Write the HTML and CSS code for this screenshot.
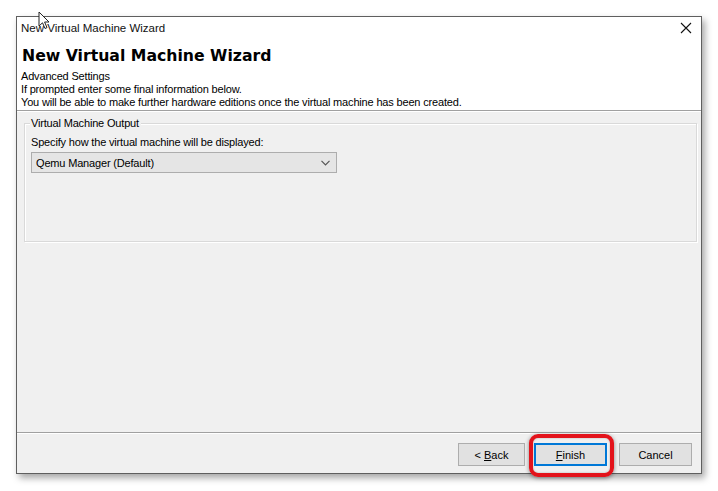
FILE: index.html
```html
<!DOCTYPE html>
<html>
<head>
<meta charset="utf-8">
<link rel="stylesheet" href="styles.css">
</head>
<body>
<div class="window">
  <div class="titlebar">
    <span class="title">New Virtual Machine Wizard</span>
    <svg class="close" width="12" height="12" viewBox="0 0 12 12"><path d="M1 1 L11 11 M11 1 L1 11" stroke="#111" stroke-width="1.1" fill="none"/></svg>
  </div>
  <div class="header">
    <div class="heading">New Virtual Machine Wizard</div>
    <div class="line">Advanced Settings</div>
    <div class="line">If prompted enter some final information below.</div>
    <div class="line">You will be able to make further hardware editions once the virtual machine has been created.</div>
  </div>
  <div class="content">
    <div class="group">
      <span class="legend">Virtual Machine Output</span>
      <div class="line">Specify how the virtual machine will be displayed:</div>
      <div class="combo">
        <span>Qemu Manager (Default)</span>
        <svg class="chev" width="9" height="6" viewBox="0 0 9 6"><path d="M0.5 0.8 L4.5 4.8 L8.5 0.8" stroke="#555" stroke-width="1.2" fill="none"/></svg>
      </div>
    </div>
  </div>
  <div class="footer">
    <div class="btn back"><span>&lt;&nbsp;<u>B</u>ack</span></div>
    <div class="finish-wrap">
      <div class="btn finish"><span><u>F</u>inish</span></div>
      <div class="highlight"></div>
    </div>
    <div class="btn cancel"><span>Cancel</span></div>
  </div>
</div>
<svg class="cursor" width="14" height="20" viewBox="0 0 14 20"><path d="M1 1 L1 15 L4.5 11.8 L7 17.5 L9 16.6 L6.6 11 L11 11 Z" fill="#fff" stroke="#222" stroke-width="1"/></svg>
</body>
</html>
```
FILE: styles.css
```css
html, body {
  margin: 0;
  padding: 0;
  background: #ffffff;
}
body {
  font-family: "Liberation Sans", Arial, sans-serif;
  font-size: 11px;
  letter-spacing: -0.17px;
  color: #000;
  width: 718px;
  height: 491px;
  overflow: hidden;
  position: relative;
}
.window {
  margin: 16px 0 0 16px;
  width: 686px;
  height: 458px;
  box-sizing: border-box;
  border: 1px solid #5f5f5f;
  background: #f0f0f0;
  display: flex;
  flex-direction: column;
  box-shadow: 3px 4px 7px rgba(0,0,0,0.35);
}
.titlebar {
  height: 22px;
  background: #fff;
  display: flex;
  align-items: center;
  justify-content: space-between;
  padding: 0 9px 0 4px;
  flex: none;
}
.title {
  font-size: 11.5px;
  letter-spacing: 0;
  color: #111;
}
.close {
  display: block;
}
.header {
  background: #fff;
  padding: 6px 4px 1px 4px;
  border-bottom: 1px solid #a0a0a0;
  box-shadow: 0 1px 0 #fff;
  flex: none;
}
.heading {
  font-family: "DejaVu Sans", Verdana, sans-serif;
  font-weight: bold;
  font-size: 15.7px;
  letter-spacing: 0;
  line-height: 22px;
  margin: 0 0 3px 1px;
}
.line {
  line-height: 13px;
  white-space: nowrap;
}
.content {
  flex: 1;
  padding: 12px 4px 0 7px;
}
.group {
  position: relative;
  height: 119px;
  box-sizing: border-box;
  border: 1px solid #d9d9d9;
  box-shadow: inset 1px 1px 0 #fff, 1px 1px 0 #fff;
  padding: 12px 6px 0 6px;
}
.legend {
  position: absolute;
  left: 5px;
  top: -7px;
  padding: 0 2px 0 1px;
  background: #f0f0f0;
  line-height: 13px;
}
.combo {
  margin-top: 3px;
  width: 306px;
  height: 21px;
  box-sizing: border-box;
  border: 1px solid #adadad;
  background: #e5e5e5;
  display: flex;
  align-items: center;
  justify-content: space-between;
  padding: 0 6px 0 4px;
}
.chev {
  display: block;
}
.footer {
  flex: none;
  border-top: 1px solid #a0a0a0;
  box-shadow: inset 0 1px 0 #fff;
  padding: 10px 9px 7px 0;
  display: flex;
  justify-content: flex-end;
  align-items: center;
}
.btn {
  height: 23px;
  box-sizing: border-box;
  border: 1px solid #adadad;
  background: #e1e1e1;
  display: flex;
  align-items: center;
  justify-content: center;
  font-size: 11px;
  letter-spacing: 0;
}
.back {
  width: 67px;
}
.finish-wrap {
  position: relative;
  margin-left: 9px;
}
.finish {
  width: 73px;
  border: 2px solid #0078d7;
}
.cancel {
  width: 73px;
  margin-left: 12px;
}
.highlight {
  position: absolute;
  left: -5px;
  top: -9px;
  right: -7px;
  bottom: -11px;
  border: 4px solid #e3131b;
  border-radius: 9px;
  box-shadow: 0 1px 4px rgba(0,0,0,0.45), inset 0 0 2px rgba(0,0,0,0.3);
}
.cursor {
  position: absolute;
  left: 38px;
  top: 11px;
}
```
